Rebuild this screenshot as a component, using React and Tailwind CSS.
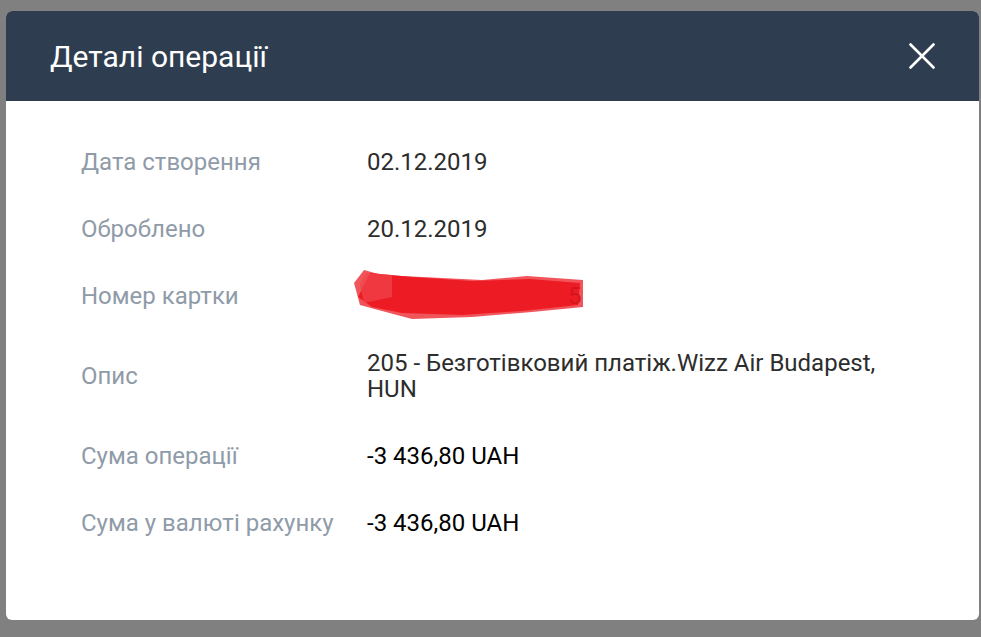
// Operation details modal over a dimmed page.
const rows = [
  { label: "Дата створення", value: "02.12.2019" },
  { label: "Оброблено", value: "20.12.2019" },
  { label: "Номер картки", value: null },
  { label: "Опис", value: "205 - Безготівковий платіж.Wizz Air Budapest, HUN" },
  { label: "Сума операції", value: "-3 436,80 UAH", strong: true },
  { label: "Сума у валюті рахунку", value: "-3 436,80 UAH", strong: true },
];

function Scribble() {
  return (
    <div className="relative -ml-[15px] h-[26px]">
      <svg width="232" height="58" viewBox="0 0 232 58" className="absolute left-0 -top-[16px]">
        <polygon points="12,3 30,8 70,10 130,13 175,9 231,13 231,40 180,45 120,50 60,52 30,44 8,38 2,16" fill="#ee2a33" opacity="0.8" />
        <polygon points="18,6 60,10 120,14 178,12 228,16 226,38 170,44 110,48 50,46 20,40 6,30" fill="#ed1c24" />
        <polygon points="8,18 14,6 40,8 40,30 12,36" fill="#f0444b" opacity="0.7" />
      </svg>
      <span className="absolute left-[216px] top-0 text-[#d3161e]">5</span>
    </div>
  );
}

export default function App() {
  return (
    <div className="h-[637px] w-full overflow-hidden bg-[#808080] pt-[11px] pl-[6px] font-['Roboto',sans-serif]">
      <div className="w-[973px] h-[609px] rounded-[6px] bg-white overflow-hidden">
        <div className="h-[90px] bg-[#2e3e50] flex items-center justify-between pl-[44px] pr-[44px]">
          <h2 className="text-[30px] text-white font-normal">Деталі операції</h2>
          <svg width="26" height="26" viewBox="0 0 26 26" className="text-white">
            <path d="M1.5 1.5 24.5 24.5M24.5 1.5 1.5 24.5" stroke="currentColor" strokeWidth="2.6" strokeLinecap="round" />
          </svg>
        </div>
        <div className="pl-[75px] pr-[75px] pt-[27px]">
          {rows.map((r) => (
            <div key={r.label} className="flex items-center py-[20.5px] text-[24px] leading-[26px]">
              <div className="w-[286px] shrink-0 text-[#8f9ba8]">{r.label}</div>
              <div className={`flex-1 ${r.strong ? "text-black" : "text-[#2d2d2d]"}`}>
                {r.value === null ? <Scribble /> : r.value}
              </div>
            </div>
          ))}
        </div>
      </div>
    </div>
  );
}
